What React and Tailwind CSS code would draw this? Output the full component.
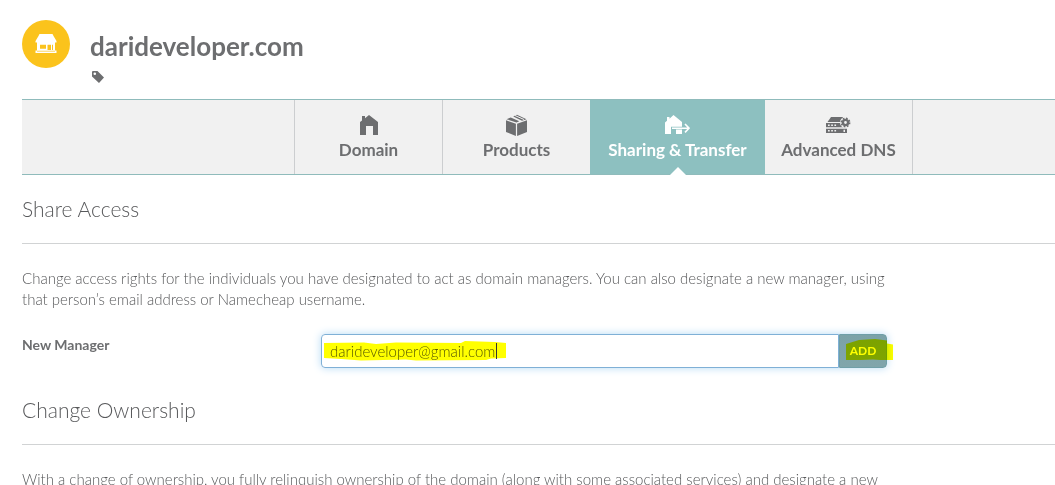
import React from "react";

function StoreIcon() {
  return (
    <svg viewBox="0 0 22 20" className="h-5 w-[22px]" aria-hidden="true">
      <path fill="#fff" d="M4.500 0h13l1 2 3 5v1.500H.500V7l3-5z" />
      <path fill="#fff" fillRule="evenodd" d="M2 8h18v8.500h1.500V19H.500v-2.500H2zM4 10v6h14v-6z" />
      <path fill="#fff" d="M4 9.500h14v1.200H4zM11 10h1.500v6.500H11zM4 14.800h8v1.700H4zM16 10h1v6.500h-1zM4 10h1v6H4z" />
      <path fill="#fbc31c" d="M2 16.800h18v.7H2z" />
    </svg>
  );
}

function TagIcon() {
  return (
    <svg viewBox="0 0 12 12" className="h-3 w-3" aria-hidden="true">
      <path fill="#6d6e70" fillRule="evenodd" d="M0 1a1 1 0 0 1 1-1h4.500L12 6.500 7 12 0 5.500zM2.800 1.500a1.300 1.300 0 1 0 0 2.600 1.300 1.300 0 0 0 0-2.600z" />
    </svg>
  );
}

function HouseIcon() {
  return (
    <svg viewBox="0 0 18 20" className="h-5 w-[18px]" aria-hidden="true">
      <path fill="currentColor" d="M2 1h3v2.200L9 0l9 7V20h-5v-9H6v9H0V7l2-1.500z" />
    </svg>
  );
}

function BoxIcon() {
  return (
    <svg viewBox="0 0 21 22" className="h-[22px] w-[21px]" aria-hidden="true">
      <path fill="currentColor" d="M0 6.300l9.900 3.500V22L0 18zM21 6.300l-9.900 3.500V22l9.900-4zM.500 5.200L4.800 3.500l8.500 3.700-2.800 1.200zM7.200 2.500L11 .8l9.500 4.400-4.500 1.500z" />
      <path stroke="#f1f1f1" strokeWidth="1" d="M9 1.500l9 4" />
    </svg>
  );
}

function TransferIcon() {
  return (
    <svg viewBox="0 0 25 20" className="h-5 w-[25px]" aria-hidden="true">
      <path fill="currentColor" d="M2 2h2.500v1.700L8.500 0 17 7v4.800H6V19H0V7.500l2-1.700zM11 14.500h6V19h-6z" />
      <path fill="none" stroke="currentColor" strokeWidth="1.600" d="M7 13.200h17M20 9l4 4.200-4 4.200" />
    </svg>
  );
}

function ServerIcon() {
  return (
    <svg viewBox="0 0 25 18" className="h-[18px] w-[25px]" aria-hidden="true">
      <path fill="currentColor" d="M5 1h12l-2 5H1.500z" />
      <path fill="currentColor" fillRule="evenodd" d="M0 7h21v4.300H0zM2 8.400v1.500h1.700V8.400zM5.200 8.400v1.500h1.700V8.400zM8.400 8.400v1.500h1.700V8.400zM0 12.700h21V17H0zM2 14.100v1.500h1.700v-1.500zM5.200 14.100v1.500h1.700v-1.500zM8.400 14.100v1.500h1.700v-1.500zM17.500 13.700v2.300H19v-2.300z" />
      <circle cx="19.500" cy="6.500" r="5.500" fill="#f1f1f1" />
      <circle cx="19.500" cy="6.500" r="2.600" fill="none" stroke="currentColor" strokeWidth="2.400" />
      <circle cx="19.500" cy="6.500" r="4.200" fill="none" stroke="currentColor" strokeWidth="1.500" strokeDasharray="1.700 1.599" />
    </svg>
  );
}

function Tab({ label, icon, active = false, width, divider = true }) {
  return (
    <a
      href="#"
      aria-current={active ? "page" : undefined}
      className={`relative flex shrink-0 flex-col items-center pt-[14px] ${width} ${
        active ? "bg-[#8dc0c0] text-white" : "text-[#6d6e70]"
      } ${divider ? "border-r border-[#ccced0]" : ""}`}
    >
      <span className="flex h-[22px] items-center">{icon}</span>
      <span className="mt-[2px] text-[17px] leading-6 font-bold whitespace-nowrap">{label}</span>
      {active && (
        <svg viewBox="0 0 16 8" className="absolute -bottom-px h-2 w-4" aria-hidden="true">
          <path fill="#fff" d="M8 0l8 8H0z" />
        </svg>
      )}
    </a>
  );
}

function Section({ title, children }) {
  return (
    <section>
      <h2 className="border-b border-[#d1d3d4] pt-5 pb-5 text-[21px] leading-7 font-light text-[#58595b]">{title}</h2>
      {children}
    </section>
  );
}

export default function App() {
  return (
    <div className="h-screen overflow-hidden bg-white pl-[22px] font-['Lato','Noto_Sans',sans-serif] text-[#6d6e70]">
      <header className="flex gap-5 pt-5 pb-4">
        <div className="flex h-12 w-12 items-center justify-center rounded-full bg-[#fbc31c]">
          <StoreIcon />
        </div>
        <div className="pt-2">
          <h1 className="text-[26px] leading-9 font-bold">darideveloper.com</h1>
          <button type="button" aria-label="Tags" className="mt-[7px] ml-[2px] block">
            <TagIcon />
          </button>
        </div>
      </header>

      <nav className="flex h-[76px] border-y border-[#8fbbbb] bg-[#f1f1f1] pl-[272px]">
        <div className="flex border-l border-[#ccced0]">
          <Tab label="Domain" width="w-[148px]" icon={<HouseIcon />} />
          <Tab label="Products" width="w-[147px]" icon={<BoxIcon />} divider={false} />
          <Tab label="Sharing &amp; Transfer" width="w-[175px]" icon={<TransferIcon />} active divider={false} />
          <Tab label="Advanced DNS" width="w-[148px]" icon={<ServerIcon />} />
        </div>
      </nav>

      <main>
        <Section title="Share Access">
          <p className="max-w-[866px] pt-6 text-[15px] leading-[21px] font-light text-[#58595b]">
            Change access rights for the individuals you have designated to act as domain managers. You can also designate a new manager, using that person’s email address or Namecheap username.
          </p>
          <form className="flex pt-6" onSubmit={(e) => e.preventDefault()}>
            <label htmlFor="manager" className="w-[299px] shrink-0 text-sm leading-[21px] font-bold">
              New Manager
            </label>
            <div className="relative flex h-[34px] w-[566px] rounded-[4px] shadow-[0_0_8px_#b5daf5]">
              <input
                id="manager"
                type="text"
                defaultValue="darideveloper@gmail.com"
                className="min-w-0 flex-1 rounded-l-[4px] border border-[#7fb0d6] bg-white px-2 text-[15px] font-light text-[#58595b] outline-none"
              />
              <button
                type="submit"
                className="w-12 rounded-r-[4px] border border-[#6f9fa8] bg-linear-to-b from-[#7ba2a8] to-[#80a5ab] text-xs font-bold text-white"
              >
                ADD
              </button>
              <svg viewBox="0 0 183 20" className="pointer-events-none absolute top-[7px] left-[3px] h-5 w-[183px] mix-blend-multiply" aria-hidden="true">
                <path fill="#ff0" d="M0 2l40-.5L52 3l20-1.500 65 .5 4-2 30 1 11 1v15l-15 .5-5 1.500-70 .5-10-1-45 1-20-1.500L0 17z" />
              </svg>
              <svg viewBox="0 0 49 22" className="pointer-events-none absolute top-1 left-[524px] h-[22px] w-[49px] mix-blend-multiply" aria-hidden="true">
                <path fill="#ff0" d="M1 6l13-4 16-1 12 1.500v3l6 1v16h-6l-14-1-13 .5-10 1-4-1z" />
              </svg>
              <span className="pointer-events-none absolute top-[9px] left-[175px] h-4 w-px bg-[#333]" />
            </div>
          </form>
        </Section>

        <div className="pt-2">
          <Section title="Change Ownership">
            <p className="max-w-[880px] pt-6 text-[15px] leading-[21px] font-light text-[#58595b]">
              With a change of ownership, you fully relinquish ownership of the domain (along with some associated services) and designate a new
            </p>
          </Section>
        </div>
      </main>
    </div>
  );
}
